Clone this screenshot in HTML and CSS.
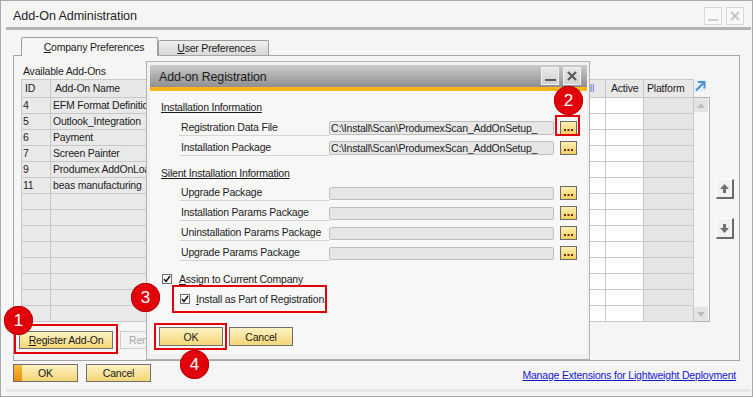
FILE: index.html
```html
<!DOCTYPE html>
<html>
<head>
<meta charset="utf-8">
<title>Add-On Administration</title>
<link rel="stylesheet" href="styles.css">
</head>
<body>
<div class="stage">
  <div class="win">
    <div class="titlebar">
      <span class="title">Add-On Administration</span>
      <div class="wbtns">
        <span class="wbtn"><svg width="10" height="10" viewBox="0 0 10 10"><rect x="0" y="8" width="10" height="2" fill="#cfcfcf"/></svg></span>
        <span class="wbtn"><svg width="10" height="10" viewBox="0 0 10 10"><path d="M1 1 L9 9 M9 1 L1 9" stroke="#c8c8c8" stroke-width="2"/></svg></span>
      </div>
    </div>
    <div class="client">
      <div class="tabs">
        <div class="tab tab-active"><span><u>C</u>ompany Preferences</span></div>
        <div class="tab"><span><u>U</u>ser Preferences</span></div>
      </div>
      <div class="panel">
        <div class="caption">Available Add-Ons</div>
        <div class="gridrow">
          <div class="grid">
            <div class="c h c1">ID</div><div class="c h c2">Add-On Name</div><div class="c h">Description</div><div class="c h">Version</div><div class="c h c5">Install</div><div class="c h c6">Active</div><div class="c h c7">Platform</div>
            <div class="c g c1">4</div><div class="c g c2">EFM Format Definitions</div><div class="c g"></div><div class="c g"></div><div class="c w"></div><div class="c w"></div><div class="c p"></div>
            <div class="c g c1">5</div><div class="c g c2">Outlook_Integration</div><div class="c g"></div><div class="c g"></div><div class="c w"></div><div class="c w"></div><div class="c p"></div>
            <div class="c g c1">6</div><div class="c g c2">Payment</div><div class="c g"></div><div class="c g"></div><div class="c w"></div><div class="c w"></div><div class="c p"></div>
            <div class="c g c1">7</div><div class="c g c2">Screen Painter</div><div class="c g"></div><div class="c g"></div><div class="c w"></div><div class="c w"></div><div class="c p"></div>
            <div class="c g c1">9</div><div class="c g c2">Produmex AddOnLoader</div><div class="c g"></div><div class="c g"></div><div class="c w"></div><div class="c w"></div><div class="c p"></div>
            <div class="c g c1">11</div><div class="c g c2">beas manufacturing</div><div class="c g"></div><div class="c g"></div><div class="c w"></div><div class="c w"></div><div class="c p"></div>
            <div class="c g"></div><div class="c g"></div><div class="c g"></div><div class="c g"></div><div class="c w"></div><div class="c w"></div><div class="c p"></div>
            <div class="c g"></div><div class="c g"></div><div class="c g"></div><div class="c g"></div><div class="c w"></div><div class="c w"></div><div class="c p"></div>
            <div class="c g"></div><div class="c g"></div><div class="c g"></div><div class="c g"></div><div class="c w"></div><div class="c w"></div><div class="c p"></div>
            <div class="c g"></div><div class="c g"></div><div class="c g"></div><div class="c g"></div><div class="c w"></div><div class="c w"></div><div class="c p"></div>
            <div class="c g"></div><div class="c g"></div><div class="c g"></div><div class="c g"></div><div class="c w"></div><div class="c w"></div><div class="c p"></div>
            <div class="c g"></div><div class="c g"></div><div class="c g"></div><div class="c g"></div><div class="c w"></div><div class="c w"></div><div class="c p"></div>
            <div class="c g"></div><div class="c g"></div><div class="c g"></div><div class="c g"></div><div class="c w"></div><div class="c w"></div><div class="c p"></div>
            <div class="c g"></div><div class="c g"></div><div class="c g"></div><div class="c g"></div><div class="c w"></div><div class="c w"></div><div class="c p"></div>
          </div>
          <div class="scrollcol">
            <div class="expand"><svg width="12" height="12" viewBox="0 0 12 12"><rect x="0" y="0" width="12" height="12" fill="#e8eff7"/><path d="M2 10.5 L9.5 3" stroke="#4f8fd6" stroke-width="2.2" fill="none"/><path d="M4 2 H10.5 V8.5" stroke="#4f8fd6" stroke-width="2" fill="none"/></svg></div>
            <div class="scrollbar">
              <div class="sbtn"><svg width="8" height="5" viewBox="0 0 8 5"><path d="M0 5 L4 0 L8 5 Z" fill="#bdbdbd"/></svg></div>
              <div class="sbtn"><svg width="8" height="5" viewBox="0 0 8 5"><path d="M0 0 L4 5 L8 0 Z" fill="#bdbdbd"/></svg></div>
            </div>
          </div>
          <div class="movecol">
            <div class="mbtn"><svg width="9" height="9" viewBox="0 0 9 9"><path d="M4.5 0 L9 5 H6 V9 H3 V5 H0 Z" fill="#707070"/></svg></div>
            <div class="mbtn mbtn-down"><svg width="9" height="9" viewBox="0 0 9 9"><path d="M4.5 9 L9 4 H6 V0 H3 V4 H0 Z" fill="#707070"/></svg></div>
          </div>
        </div>
        <div class="panelbtns">
          <div class="btn btn-reg"><span><u>R</u>egister Add-On</span></div>
          <div class="btn-dis">Remove</div>
        </div>
      </div>
      <div class="footer">
        <div class="btn btn-ok">OK</div>
        <div class="btn btn-cancel">Cancel</div>
        <a class="link">Manage Extensions for Lightweight Deployment</a>
      </div>
    </div>
  </div>

  <div class="dialog">
    <div class="dtitle">
      <span class="dtitle-text">Add-on Registration</span>
      <div class="dwbtns">
        <span class="dbtn"><svg width="11" height="10" viewBox="0 0 11 10"><rect x="0" y="8" width="11" height="2" fill="#5a5a5a"/></svg></span>
        <span class="dbtn"><svg width="10" height="10" viewBox="0 0 10 10"><path d="M1 1 L9 9 M9 1 L1 9" stroke="#5a5a5a" stroke-width="2.2"/></svg></span>
      </div>
    </div>
    <div class="dstripe"></div>
    <div class="dbody">
      <div class="sect sect1">Installation Information</div>
      <div class="frow"><span class="flabel">Registration Data File</span><span class="field">C:\Install\Scan\ProdumexScan_AddOnSetup_</span><span class="dots"><svg width="9" height="2" viewBox="0 0 9 2"><rect x="0" y="0" width="2" height="2" fill="#7a2a10"/><rect x="3.5" y="0" width="2" height="2" fill="#7a2a10"/><rect x="7" y="0" width="2" height="2" fill="#7a2a10"/></svg></span></div>
      <div class="frow"><span class="flabel">Installation Package</span><span class="field">C:\Install\Scan\ProdumexScan_AddOnSetup_</span><span class="dots"><svg width="9" height="2" viewBox="0 0 9 2"><rect x="0" y="0" width="2" height="2" fill="#7a2a10"/><rect x="3.5" y="0" width="2" height="2" fill="#7a2a10"/><rect x="7" y="0" width="2" height="2" fill="#7a2a10"/></svg></span></div>
      <div class="sect sect2">Silent Installation Information</div>
      <div class="frow"><span class="flabel">Upgrade Package</span><span class="field field-s"></span><span class="dots"><svg width="9" height="2" viewBox="0 0 9 2"><rect x="0" y="0" width="2" height="2" fill="#7a2a10"/><rect x="3.5" y="0" width="2" height="2" fill="#7a2a10"/><rect x="7" y="0" width="2" height="2" fill="#7a2a10"/></svg></span></div>
      <div class="frow"><span class="flabel">Installation Params Package</span><span class="field field-s"></span><span class="dots"><svg width="9" height="2" viewBox="0 0 9 2"><rect x="0" y="0" width="2" height="2" fill="#7a2a10"/><rect x="3.5" y="0" width="2" height="2" fill="#7a2a10"/><rect x="7" y="0" width="2" height="2" fill="#7a2a10"/></svg></span></div>
      <div class="frow"><span class="flabel">Uninstallation Params Package</span><span class="field field-s"></span><span class="dots"><svg width="9" height="2" viewBox="0 0 9 2"><rect x="0" y="0" width="2" height="2" fill="#7a2a10"/><rect x="3.5" y="0" width="2" height="2" fill="#7a2a10"/><rect x="7" y="0" width="2" height="2" fill="#7a2a10"/></svg></span></div>
      <div class="frow"><span class="flabel">Upgrade Params Package</span><span class="field field-s"></span><span class="dots"><svg width="9" height="2" viewBox="0 0 9 2"><rect x="0" y="0" width="2" height="2" fill="#7a2a10"/><rect x="3.5" y="0" width="2" height="2" fill="#7a2a10"/><rect x="7" y="0" width="2" height="2" fill="#7a2a10"/></svg></span></div>
      <div class="chk chk1"><span class="box"><svg width="8" height="8" viewBox="0 0 8 8"><path d="M1 4 L3 6.5 L7 1" stroke="#1a1a1a" stroke-width="1.6" fill="none"/></svg></span><span><u>A</u>ssign to Current Company</span></div>
      <div class="chk chk2"><span class="box"><svg width="8" height="8" viewBox="0 0 8 8"><path d="M1 4 L3 6.5 L7 1" stroke="#1a1a1a" stroke-width="1.6" fill="none"/></svg></span><span><u>I</u>nstall as Part of Registration</span></div>
      <div class="dbtnrow">
        <div class="btn dbtn-w">OK</div>
        <div class="btn dbtn-w">Cancel</div>
      </div>
    </div>
  </div>

  <div class="mark mark1"></div>
  <div class="mark mark2"></div>
  <div class="mark mark3"></div>
  <div class="mark mark4"></div>
  <div class="badge b1">1</div>
  <div class="badge b2">2</div>
  <div class="badge b3">3</div>
  <div class="badge b4">4</div>
</div>
</body>
</html>
```

FILE: styles.css
```css
* { box-sizing: border-box; }
html, body { margin: 0; padding: 0; }
body {
  width: 753px;
  height: 397px;
  overflow: hidden;
  background: #ffffff;
  font-family: "Liberation Sans", Arial, sans-serif;
  font-size: 10.5px;
  letter-spacing: -0.2px;
  color: #1c1c1c;
}
.stage { position: relative; width: 753px; height: 397px; }

.win {
  width: 753px;
  height: 397px;
  border: 1px solid #a9a9a9;
  background: #f5f5f5;
  display: flex;
  flex-direction: column;
}
.titlebar {
  height: 26px;
  flex: none;
  display: flex;
  align-items: flex-start;
  padding: 6px 8px 0 12px;
}
.title { font-size: 12.6px; letter-spacing: -0.1px; line-height: 15px; margin-top: 2px; color: #1d1d1d; }
.wbtns { margin-left: auto; display: flex; gap: 4px; }
.wbtn {
  width: 18px; height: 18px;
  border: 1px solid #d9d9d9;
  background: #f8f8f8;
  display: flex; align-items: center; justify-content: center;
}

.client {
  flex: none;
  margin: 0 1px 0 5px;
  border-top: 3px solid #b3b3b3;
  padding-top: 7px;
  height: 365px;
  border-bottom: 3px solid #e8e8e8;
}
.tabs { display: flex; align-items: flex-end; height: 18px; margin-left: 15px; }
.tab {
  height: 15px; width: 111px;
  border: 1px solid #9c9c9c; border-bottom: none;
  border-radius: 2px 2px 0 0;
  background: linear-gradient(#eeeeee, #d9d9d9);
  display: flex; align-items: center; justify-content: center;
  padding-left: 6px;
  line-height: 12px;
}
.tab-active {
  height: 19px; width: 137px;
  margin-bottom: -1px;
  background: #f5f5f5;
  position: relative; z-index: 1;
  padding-left: 9px;
  border-color: #a0a0a0;
}

.panel {
  margin-left: 7px;
  width: 727px; height: 306px;
  border: 1px solid #a6a6a6;
  background: #f5f5f5;
  padding-top: 9px;
}
.caption { line-height: 12px; padding-left: 9px; }
.gridrow { display: flex; margin-top: 2px; margin-left: 7px; align-items: flex-start; }
.grid {
  display: grid;
  grid-template-columns: 29px 150px 200px 165px 40px 38px 50px;
  grid-template-rows: 18px repeat(14, 16px);
  border-left: 1px solid #c8c8c8;
  border-top: 1px solid #c8c8c8;
}
.c {
  border-right: 1px solid #c8c8c8;
  border-bottom: 1px solid #c8c8c8;
  overflow: hidden;
  white-space: nowrap;
  line-height: 15px;
  padding-left: 2px;
}
.h { background: #e8e8e8; line-height: 17px; padding-left: 4px; }
.h.c1 { padding-left: 3px; }
.h.c5 { padding-left: 2px; color: #4a7fc4; }
.h.c6 { padding-left: 5px; }
.h.c7 { padding-left: 3px; }
.g { background: #e9e9e9; }
.g.c1 { padding-left: 1px; }
.w { background: #ffffff; }
.p { background: #e6e6e6; }

.scrollcol { width: 16px; display: flex; flex-direction: column; }
.expand { height: 18px; padding-top: 1px; display: flex; }
.scrollbar {
  height: 225px;
  border: 1px solid #b4b4b4; border-left: none;
  background: #f6f6f6;
  display: flex; flex-direction: column; justify-content: space-between;
}
.sbtn {
  width: 14px; height: 14px;
  background: #e4e4e4;
  display: flex; align-items: center; justify-content: center;
}
.movecol { margin-left: 6px; padding-top: 100px; display: flex; flex-direction: column; }
.mbtn {
  width: 18px; height: 20px;
  background: #f2f2f2;
  border-top: 1px solid #ffffff; border-left: 1px solid #ffffff;
  border-right: 2px solid #6a6a6a; border-bottom: 2px solid #6a6a6a;
  display: flex; align-items: center; justify-content: center;
}
.mbtn-down { margin-top: 19px; height: 21px; }

.panelbtns { display: flex; margin-top: 9px; margin-left: 5px; gap: 7px; }
.btn {
  height: 18px;
  border: 1px solid #6f6f6f;
  background: linear-gradient(#fdf2c3, #f4d676);
  display: flex; align-items: center; justify-content: center;
  line-height: 12px; color: #1a1a1a;
}
.btn-reg { width: 94px; }
.btn-dis {
  width: 94px; height: 18px;
  border: 1px solid #cfcfcf;
  background: #f3f3f3;
  color: #a9a9a9;
  padding-left: 8px;
  display: flex; align-items: center;
}

.footer { display: flex; align-items: center; margin-top: 3px; padding: 0 15px 0 7px; gap: 8px; }
.btn-ok {
  width: 65px;
  background: linear-gradient(#f7bf3e, #e98d0b) left top / 8px 100% no-repeat, linear-gradient(#fdf2c3, #f4d676);
}
.btn-cancel { width: 65px; }
.link { margin-left: auto; color: #1616d2; text-decoration: underline; line-height: 12px; margin-top: 3px; }

.dialog {
  position: absolute;
  left: 146px; top: 61px;
  width: 444px; height: 299px;
  border: 1px solid #b3b3b3;
  background: #f0f0f0;
  padding: 3px 2px 5px 3px;
  display: flex; flex-direction: column;
}
.dtitle {
  height: 22px; flex: none;
  background: linear-gradient(#cbcbcb, #8f8f8f);
  display: flex; align-items: center;
  padding: 0 6px 0 9px;
}
.dtitle-text { font-size: 12.4px; letter-spacing: -0.1px; line-height: 14px; color: #1c1c1c; margin-top: 1px; }
.dwbtns { margin-left: auto; display: flex; gap: 4px; }
.dbtn {
  width: 18px; height: 18px;
  border: 1px solid #f2f2f2;
  background: linear-gradient(#e8e8e8, #d0d0d0);
  display: flex; align-items: center; justify-content: center;
}
.dstripe { height: 4px; flex: none; background: #fbb616; }
.dbody { flex: 1; background: #f7f7f7; padding: 10px 0 0 11px; }
.sect { line-height: 12px; text-decoration: underline; color: #1a1a1a; }
.sect1 { margin-bottom: 5px; }
.sect2 { margin-top: 9px; margin-bottom: 4px; }
.frow { display: flex; align-items: center; height: 20px; margin-left: 18px; }
.flabel {
  width: 150px; height: 15px;
  line-height: 13px;
  padding-left: 2px;
  border-bottom: 1px solid #d5d5d5;
}
.field {
  width: 225px; height: 14px;
  background: #e6e6e6;
  border: 1px solid #bfbfbf;
  border-radius: 2px;
  line-height: 12px;
  padding-left: 1px;
  overflow: hidden;
  white-space: nowrap;
}
.field-s { height: 13px; }
.dots {
  width: 17px; height: 14px;
  margin-left: 6px;
  border: 1px solid #6b6b6b;
  background: linear-gradient(#fcf0b4, #f2cf62);
  display: flex; align-items: flex-end; justify-content: center;
  padding-bottom: 3px;
}
.chk { display: flex; align-items: center; height: 20px; gap: 7px; line-height: 12px; }
.chk1 { margin-top: 6px; margin-left: 1px; }
.chk2 { margin-left: 19px; gap: 6px; }
.box {
  width: 10px; height: 10px;
  border: 1px solid #6e6e6e;
  background: #ffffff;
  display: flex; align-items: center; justify-content: center;
}
.dbtnrow { display: flex; gap: 6px; margin-top: 18px; margin-left: -2px; }
.dbtn-w { width: 64px; height: 19px; }

.mark { position: absolute; border: 2px solid #e2000b; }
.mark1 { left: 14px; top: 324px; width: 104px; height: 30px; }
.mark2 { left: 555px; top: 115px; width: 25px; height: 21px; }
.mark3 { left: 172px; top: 285px; width: 155px; height: 28px; }
.mark4 { left: 154px; top: 323px; width: 73px; height: 27px; }

.badge {
  position: absolute;
  width: 29px; height: 29px;
  border-radius: 50%;
  background: #e2000b;
  box-shadow: inset 0 0 0 1px #b80008;
  color: #ffffff;
  font-size: 17px;
  letter-spacing: 0;
  line-height: 29px;
  text-align: center;
}
.b1 { left: 4px; top: 306px; }
.b2 { left: 554px; top: 86px; }
.b3 { left: 131px; top: 283px; }
.b4 { left: 180px; top: 350px; }
```
